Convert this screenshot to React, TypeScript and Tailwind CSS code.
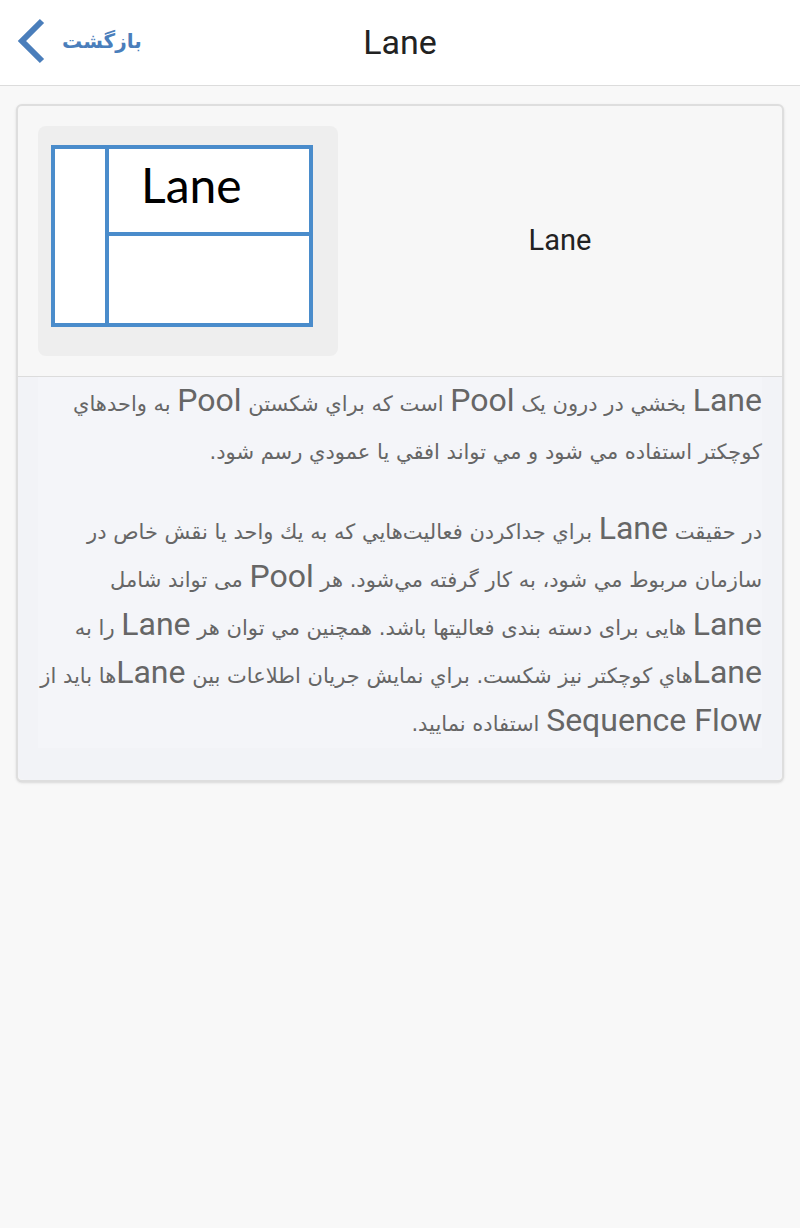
import React from "react";

const En = ({ children }: { children: React.ReactNode }) => (
  <span className="font-['Roboto',sans-serif] text-[32px] leading-none">{children}</span>
);

const LaneDiagram = () => (
  <svg width="262" height="182" viewBox="0 0 262 182">
    <rect x="2" y="2" width="258" height="178" fill="#fff" stroke="#4a8ccb" strokeWidth="4" />
    <line x1="56" y1="2" x2="56" y2="180" stroke="#4a8ccb" strokeWidth="4" />
    <line x1="56" y1="89" x2="260" y2="89" stroke="#4a8ccb" strokeWidth="4" />
    <text x="90" y="58" fontSize="48" fontFamily="Lato, 'Open Sans', sans-serif" fill="#000">
      Lane
    </text>
  </svg>
);

export default function App() {
  return (
    <div className="min-h-[1228px] bg-[#f8f8f8] font-['Roboto','DejaVu_Sans',sans-serif]">
      {/* HEADER */}
      <header className="relative flex h-[86px] items-center justify-center border-b border-[#dcdcdc] bg-white">
        <button className="absolute left-[16px] top-[18px] flex items-center gap-[16px] text-[#4a7ebb]">
          <svg width="30" height="46" viewBox="0 0 30 46">
            <path d="M26 3 L6 23 L26 43" fill="none" stroke="#4a7ebb" strokeWidth="6" />
          </svg>
          <span dir="rtl" className="font-['DejaVu_Sans',sans-serif] text-[20px] font-bold">
            بازگشت
          </span>
        </button>
        <h1 className="text-[34px] text-[#222]">Lane</h1>
      </header>

      {/* CARD */}
      <div className="mx-[16px] mt-[18px] rounded-[6px] border-2 border-[#dedede] bg-[#f7f7f7] shadow-sm">
        <div className="flex items-center border-b border-[#dcdcdc] py-[20px] pl-[20px]">
          <div className="h-[230px] w-[300px] shrink-0 rounded-[8px] bg-[#eeeeee] pl-[13px] pt-[19px]">
            <LaneDiagram />
          </div>
          <div className="flex-1 text-center text-[29px] text-[#222]">Lane</div>
        </div>

        <div className="rounded-b-[6px] bg-[#f2f3f7] px-[20px] pb-[32px]">
          <div
            dir="rtl"
            className="bg-[#f4f5f9] pt-[3px] text-right font-['DejaVu_Sans',sans-serif] text-[21px] leading-[48px] text-[#666]"
          >
            <p className="whitespace-nowrap">
              <En>Lane</En> بخشي در درون يک <En>Pool</En> است كه براي شكستن <En>Pool</En> به واحدهاي
              <br />
              كوچكتر استفاده مي شود و مي تواند افقي يا عمودي رسم شود.
            </p>
            <p className="mt-[32px] whitespace-nowrap">
              در حقيقت <En>Lane</En> براي جداكردن فعاليت‌هايي كه به يك واحد يا نقش خاص در
              <br />
              سازمان مربوط مي شود، به كار گرفته مي‌شود. هر <En>Pool</En> می تواند شامل
              <br />
              <En>Lane</En> هایی برای دسته بندی فعالیتها باشد. همچنين مي توان هر <En>Lane</En> را به
              <br />
              <En>Lane</En>هاي كوچكتر نيز شكست. براي نمايش جريان اطلاعات بين <En>Lane</En>ها بايد از
              <br />
              <En>Sequence Flow</En> استفاده نماييد.
            </p>
          </div>
        </div>
      </div>
    </div>
  );
}
